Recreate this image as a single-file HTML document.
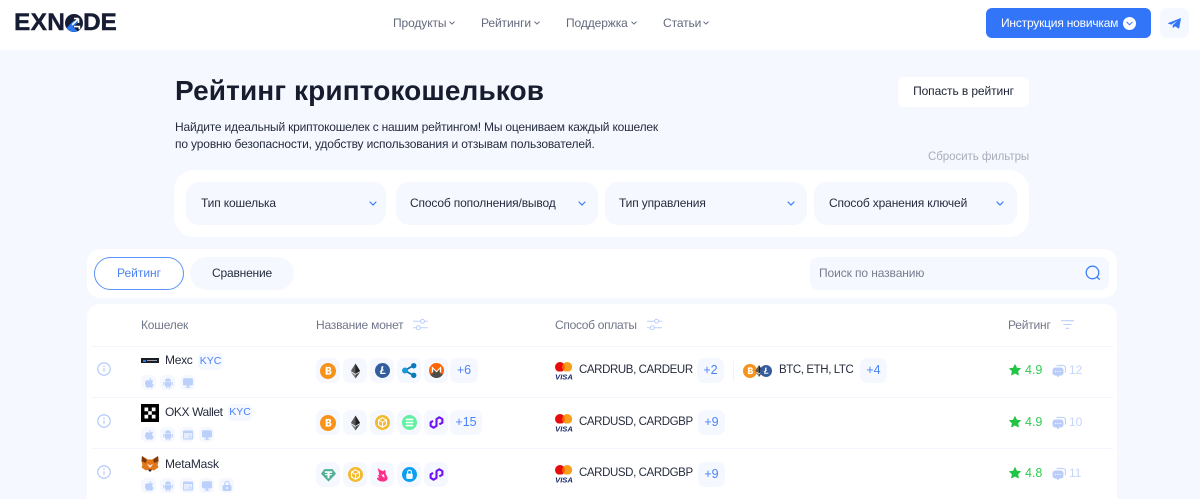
<!DOCTYPE html>
<html lang="ru"><head><meta charset="utf-8"><title>Рейтинг криптокошельков</title>
<style>
*{box-sizing:border-box}
html,body{margin:0;padding:0;overflow:hidden;height:499px}
body{width:1200px;position:relative;background:#f5f8ff;font-family:"Liberation Sans","DejaVu Sans",sans-serif;color:#1b2233}
.a{position:absolute;white-space:nowrap}
.w{background:#fff}
.t{position:absolute;white-space:nowrap;line-height:16px;height:16px}
.nav{font-size:12px;color:#636a7e;top:15px;letter-spacing:-.1px}
.th{font-size:12px;color:#71778a;top:317px;letter-spacing:-.2px}
.flt{position:absolute;top:182px;height:43px;background:#f5f8ff;border-radius:13px;font-size:12px;letter-spacing:-.15px;line-height:43px;padding-left:15px;color:#262c3e}
.ci{position:absolute;background:#f5f8ff;border-radius:7px;width:24px;height:25px;display:flex;align-items:center;justify-content:center}
.pl{position:absolute;background:#f5f8ff;border-radius:7px;height:25px;line-height:25px;text-align:center;font-size:12.5px;color:#4b83f7}
.si{position:absolute;width:15px;height:15px;background:#f5f8ff;border-radius:5px;display:flex;align-items:center;justify-content:center}
.kyc{position:absolute;height:17px;line-height:17px;background:#f5f8ff;border-radius:5px;color:#4b83f7;font-size:10.5px;text-align:center}
.nm{font-size:12px;color:#262c3e}
.pay{font-size:11.5px;letter-spacing:-.4px;color:#262c3e}
.hr{position:absolute;left:91px;width:1022px;height:1px;background:#f3f6fe}
.sc{color:#2fcb52;font-size:12.5px}
.cc{color:#c6d5fc;font-size:12px}
svg{display:block}
</style></head><body>
<svg width="0" height="0" style="position:absolute">
<defs>
<symbol id="btc" viewBox="0 0 16 16"><circle cx="8" cy="8" r="8" fill="#f7931a"/><path d="M5.6 3.9h3.3c1.5 0 2.2.8 2.2 1.9 0 .8-.4 1.4-1.1 1.7.9.2 1.5.9 1.5 1.9 0 1.4-1 2.2-2.5 2.2H5.6V3.9zm2 1.5v1.6h1c.5 0 .8-.3.8-.8s-.3-.8-.8-.8h-1zm0 3v1.7h1.2c.6 0 .9-.3.9-.9s-.3-.8-.9-.8H7.600z" fill="#fff"/></symbol>
<symbol id="eth" viewBox="0 0 16 16"><path d="M8 0 3 8l5 3z" fill="#5a5a5a"/><path d="M8 0l5 8-5 3z" fill="#222"/><path d="M3 9l5 7v-4z" fill="#8a8a8a"/><path d="M13 9l-5 7v-4z" fill="#444"/></symbol>
<symbol id="ltc" viewBox="0 0 16 16"><circle cx="8" cy="8" r="8" fill="#345d9d"/><path d="M7 3.500h2L8.100 7.300l1.500-.5-.3 1.100-1.600.6-.5 1.900h4.200l-.4 1.300H5.300l.8-2.700-1.200.4.3-1 1.200-.5z" fill="#fff"/></symbol>
<symbol id="xrp" viewBox="0 0 16 16"><path d="M3 8l9.500-5.500M3 8l9.500 5.500" stroke="#0a74b0" stroke-width="1.900"/><circle cx="3.200" cy="8" r="3.200" fill="#1a9ad6"/><circle cx="12.500" cy="2.900" r="2.900" fill="#0a7ab8"/><circle cx="12.500" cy="13.100" r="2.900" fill="#0a7ab8"/></symbol>
<symbol id="xmr" viewBox="0 0 16 16"><circle cx="8" cy="8" r="8" fill="#ff6600"/><path d="M1 11.500h3V6l4 4 4-4v5.500h3A8 8 0 0 1 8 16a8 8 0 0 1-7-4.500z" fill="#4c4c4c"/><path d="M3 10V3.500l5 5 5-5V10h-1.500V6.500L8 10 4.500 6.500V10z" fill="#fff"/></symbol>
<symbol id="bnb" viewBox="0 0 16 16"><circle cx="8" cy="8" r="8" fill="#f3ba2f"/><path d="M8 3l4.200 2.400v5.200L8 13l-4.200-2.400V5.400z" fill="none" stroke="#fff" stroke-width="1.200"/><path d="M3.800 5.400L8 7.800l4.200-2.400M8 7.800V13" fill="none" stroke="#fff" stroke-width="1"/></symbol>
<symbol id="sol" viewBox="0 0 16 16"><circle cx="8" cy="8" r="8" fill="#5ff0a0"/><path d="M4 4.700h8M4 8h8M4 11.300h8" stroke="#fff" stroke-width="1.700"/></symbol>
<symbol id="pol" viewBox="1.400 2.800 13.800 12.400"><path d="M5 7.500 2.700 8.800v3.400L5.500 14l2.800-1.800V5.800L11 4l2.900 1.800v3.400L11 10.800" fill="none" stroke="#6f12f5" stroke-width="2" stroke-linejoin="round"/></symbol>
<symbol id="usdt" viewBox="0 0 18 16"><path d="M4 1h10l4 5.500L9 16 0 6.500z" fill="#50af95"/><path d="M4.500 3.500h9v2h-3.300v1.200c1.800.1 3.300.4 3.300.9s-1.500.8-3.300.9V12H7.800V8.500c-1.800-.1-3.300-.4-3.300-.9s1.500-.8 3.300-.9V5.500H4.500z" fill="#fff"/></symbol>
<symbol id="uni" viewBox="0 0 16 18"><path d="M2 1c3 2.500 5 3.500 7 3.800.7-.8 1.500-1.300 2.300-1.300l.9 5.500c1.200 1.700 2 3 2 4.500 0 2.500-2.500 4.200-5.500 4.200-3.500 0-7-1.500-7.500-4 .5-1 1.300-1 2-.5.500-1.500 0-2-1-3.500.8-.3 1.500-.2 2 .2C3.500 7 3 4 2 1z" fill="#ff2d87"/><path d="M6 9c1.500.5 3 .2 4-.8-.2 2-.2 3 1.200 4.500-1.800 0-3.200-.8-3.500-2.200z" fill="#fff"/></symbol>
<symbol id="lock" viewBox="0 0 16 16"><circle cx="8" cy="8" r="8" fill="#0a9ff0"/><rect x="4.600" y="7" width="6.800" height="5.600" rx="1" fill="#fff"/><path d="M5.900 7V5.500a2.100 2.100 0 0 1 4.200 0V7" fill="none" stroke="#fff" stroke-width="1.200"/></symbol>
<symbol id="visa" viewBox="0 0 18 18"><circle cx="5" cy="5" r="5" fill="#e80b0b"/><circle cx="12.200" cy="5" r="5" fill="#f79e1b"/><path d="M8.600 1.600a5 5 0 0 1 0 6.800 5 5 0 0 1 0-6.800z" fill="#ff5f00"/><rect y="9.500" width="18" height="8.500" fill="#fff"/><text x="9" y="17.300" text-anchor="middle" font-family="Liberation Sans" font-size="7.600" font-weight="700" font-style="italic" fill="#1a2a6c">VISA</text></symbol>
<symbol id="apple" viewBox="0 0 12 12"><path d="M8.200 1c.1.900-.8 2-1.900 1.900C6.200 2 7.200 1 8.200 1zM6.300 3.500c.6 0 1.200-.5 2-.5.800 0 1.500.4 1.900 1-1.600.9-1.300 3 .4 3.700-.4 1.200-1.300 3-2.400 3-.7 0-1-.4-1.800-.4s-1.100.4-1.800.4C3.400 10.700 2 8.200 2 6.200c0-2 1.300-3.100 2.600-3.100.7 0 1.200.4 1.700.4z" fill="#bcd0fc"/></symbol>
<symbol id="andr" viewBox="0 0 12 12"><path d="M3 4.200a3 3 0 0 1 6 0z" fill="#bcd0fc"/><rect x="3" y="4.800" width="6" height="4.700" rx=".7" fill="#bcd0fc"/><rect x="1.300" y="4.800" width="1.200" height="3.600" rx=".6" fill="#bcd0fc"/><rect x="9.500" y="4.800" width="1.200" height="3.600" rx=".6" fill="#bcd0fc"/><rect x="4" y="9" width="1.300" height="2.300" rx=".6" fill="#bcd0fc"/><rect x="6.700" y="9" width="1.300" height="2.300" rx=".6" fill="#bcd0fc"/></symbol>
<symbol id="desk" viewBox="0 0 12 12"><rect x="1" y="1.300" width="10" height="7.200" rx="1.500" fill="#bcd0fc"/><rect x="5" y="8.500" width="2" height="1.500" fill="#bcd0fc"/><rect x="3.500" y="9.800" width="5" height="1" rx=".5" fill="#bcd0fc"/></symbol>
<symbol id="web" viewBox="0 0 12 12"><rect x="1" y="1.500" width="10" height="9" rx="1.300" fill="#bcd0fc"/><rect x="2" y="4" width="8" height="5.500" fill="#e4ecff"/><path d="M7 6.500l3 1.500-1.500.5-.5 1.500z" fill="#bcd0fc"/></symbol>
<symbol id="hw" viewBox="0 0 12 12"><rect x="1.500" y="5" width="9" height="6" rx="1.500" fill="#bcd0fc"/><path d="M3.800 5V3.500a2.200 2.200 0 0 1 4.400 0V5" fill="none" stroke="#bcd0fc" stroke-width="1.100"/><circle cx="6" cy="8" r="1" fill="#f5f8ff"/></symbol>
<symbol id="info" viewBox="0 0 14 14"><circle cx="7" cy="7" r="6.200" fill="none" stroke="#a9c4fb" stroke-width="1.100"/><path d="M7 6.300v3.500" stroke="#a9c4fb" stroke-width="1.100"/><circle cx="7" cy="4.300" r=".7" fill="#a9c4fb"/></symbol>
<symbol id="star" viewBox="0 0 14 14"><path d="M7 .8l1.900 4 4.400.5-3.200 3 .9 4.400L7 10.500l-4 2.200.9-4.400-3.200-3 4.400-.5z" fill="#20c545" stroke="#20c545" stroke-linejoin="round"/></symbol>
<symbol id="bub" viewBox="0 0 14 14"><path d="M4.500 1.500h6.500a2.500 2.500 0 0 1 2.500 2.500v4.500" fill="none" stroke="#c3d4fc" stroke-width="1.300"/><rect x="0.500" y="3.500" width="11" height="8" rx="2.800" fill="#b9ccfa"/><path d="M4.500 11.500h3L5.800 13.500z" fill="#b9ccfa"/><circle cx="3.700" cy="7.500" r=".6" fill="#fff"/><circle cx="6" cy="7.500" r=".6" fill="#fff"/><circle cx="8.300" cy="7.500" r=".6" fill="#fff"/></symbol>
<symbol id="sl" viewBox="0 0 16 14"><g fill="none" stroke="#bccffa" stroke-width="1.100"><path d="M0 3.500h8M12.500 3.500H16M0 10.500h3.500M8 10.500h8"/><circle cx="10.200" cy="3.500" r="2.100"/><circle cx="5.700" cy="10.500" r="2.100"/></g></symbol>
<symbol id="chev" viewBox="0 0 8 5"><path d="M1 1l3 3 3-3" fill="none" stroke="currentColor" stroke-width="1.200" stroke-linecap="round"/></symbol>
</defs></svg>

<div class="a w" style="left:0;top:0;width:1200px;height:50px"></div>

<!-- logo -->
<div class="t" style="left:14px;top:12px;height:22px;line-height:22px;font-size:24.500px;font-weight:700;color:#151c33;letter-spacing:.3px;-webkit-text-stroke:.4px #151c33">EXN</div>
<svg class="a" style="left:65px;top:14px" width="18" height="18" viewBox="0 0 20 20"><circle cx="10" cy="10" r="10" fill="#151c33"/><path d="M2 15.500A10 10 0 0 0 14 19.200L9 14l5-4 0-4-5 2-3 3z" fill="#2a78f5"/><path d="M8 12l7-7M15 5v5M15 5h-5" stroke="#fff" stroke-width="1.800" fill="none"/><path d="M10 14h6v3" stroke="#fff" stroke-width="1.800" fill="none"/></svg>
<div class="t" style="left:83px;top:12px;height:22px;line-height:22px;font-size:24.500px;font-weight:700;color:#151c33;letter-spacing:-.2px;-webkit-text-stroke:.4px #151c33">DE</div>

<!-- nav -->
<div class="t nav" style="left:393px">Продукты</div><svg class="a" style="left:449px;top:21px;color:#636a7e" width="6" height="4"><use href="#chev"/></svg>
<div class="t nav" style="left:481px">Рейтинги</div><svg class="a" style="left:534px;top:21px;color:#636a7e" width="6" height="4"><use href="#chev"/></svg>
<div class="t nav" style="left:566px">Поддержка</div><svg class="a" style="left:631px;top:21px;color:#636a7e" width="6" height="4"><use href="#chev"/></svg>
<div class="t nav" style="left:663px">Статьи</div><svg class="a" style="left:703px;top:21px;color:#636a7e" width="6" height="4"><use href="#chev"/></svg>

<!-- header buttons -->
<div class="a" style="left:986px;top:8px;width:165px;height:30px;background:#3275f8;border-radius:6px"></div>
<div class="t" style="left:1001px;top:15px;font-size:12px;letter-spacing:-.2px;color:#fff">Инструкция новичкам</div>
<div class="a" style="left:1123px;top:17px;width:13px;height:13px;border-radius:50%;background:#fff"></div>
<svg class="a" style="left:1126px;top:21px;color:#3275f8" width="7" height="5"><use href="#chev"/></svg>
<div class="a" style="left:1160px;top:8px;width:29px;height:30px;background:#f5f8ff;border-radius:7px"></div>
<svg class="a" style="left:1168px;top:18px" width="13" height="11" viewBox="0 0 13 11"><path d="M.3 5L12.300.2c.4-.1.700.2.600.6l-1.700 9.200c-.1.500-.6.600-1 .3L7 8.200 5.300 9.800c-.2.200-.5.100-.5-.2L4.600 7.200 9.500 2.800 3.200 6.600.4 5.700C0 5.600 0 5.200.3 5z" fill="#3275f8"/></svg>

<!-- title -->
<div class="a" style="left:175px;top:73px;font-size:28px;line-height:36px;font-weight:700;color:#171d2e;letter-spacing:.12px">Рейтинг криптокошельков</div>
<div class="a w" style="left:898px;top:77px;width:131px;height:30px;border-radius:6px;text-align:center;line-height:29px;font-size:12px;letter-spacing:-.1px;color:#1b2233">Попасть в рейтинг</div>
<div class="t" style="left:175px;top:119px;font-size:12px;letter-spacing:-.2px;color:#262c3e">Найдите идеальный криптокошелек с нашим рейтингом! Мы оцениваем каждый кошелек</div>
<div class="t" style="left:175px;top:136px;font-size:12px;letter-spacing:-.15px;color:#262c3e">по уровню безопасности, удобству использования и отзывам пользователей.</div>
<div class="t" style="left:928px;top:149px;font-size:11.500px;letter-spacing:-.05px;color:#a8adba">Сбросить фильтры</div>

<!-- filters -->
<div class="a w" style="left:174px;top:170px;width:855px;height:67px;border-radius:20px"></div>
<div class="flt" style="left:186px;width:200px">Тип кошелька</div>
<div class="flt" style="left:396px;width:202px;padding-left:14px">Способ пополнения/вывод</div>
<div class="flt" style="left:605px;width:202px;padding-left:14px">Тип управления</div>
<div class="flt" style="left:814px;width:203px">Способ хранения ключей</div>
<svg class="a" style="left:369px;top:201px;color:#3a7cf6" width="8" height="5"><use href="#chev"/></svg>
<svg class="a" style="left:578px;top:201px;color:#3a7cf6" width="8" height="5"><use href="#chev"/></svg>
<svg class="a" style="left:787px;top:201px;color:#3a7cf6" width="8" height="5"><use href="#chev"/></svg>
<svg class="a" style="left:996px;top:201px;color:#3a7cf6" width="8" height="5"><use href="#chev"/></svg>

<!-- tabs panel -->
<div class="a w" style="left:87px;top:249px;width:1030px;height:49px;border-radius:13px"></div>
<div class="a" style="left:94px;top:257px;width:90px;height:33px;border:1px solid #5b93f8;border-radius:17px;text-align:center;line-height:31px;font-size:12px;color:#4b83f7;background:#fff">Рейтинг</div>
<div class="a" style="left:190px;top:257px;width:104px;height:33px;background:#f5f8ff;border-radius:17px;text-align:center;line-height:33px;font-size:12px;color:#262c3e;letter-spacing:-.2px">Сравнение</div>
<div class="a" style="left:810px;top:257px;width:299px;height:33px;background:#f5f8ff;border-radius:8px"></div>
<div class="t" style="left:819px;top:265px;font-size:12px;color:#777d8e;letter-spacing:-.1px">Поиск по названию</div>
<svg class="a" style="left:1085px;top:265px" width="16" height="17" viewBox="0 0 16 17"><circle cx="7.500" cy="7.500" r="6.300" fill="none" stroke="#3f80f6" stroke-width="1.300"/><path d="M12.500 12.500l1.800 1.800" stroke="#3f80f6" stroke-width="1.300" stroke-linecap="round"/></svg>

<!-- table -->
<div class="a w" style="left:87px;top:304px;width:1030px;height:195px;border-radius:13px 13px 0 0"></div>
<div class="t th" style="left:141px">Кошелек</div>
<div class="t th" style="left:316px">Название монет</div>
<svg class="a" style="left:413px;top:318px" width="15" height="13"><use href="#sl"/></svg>
<div class="t th" style="left:555px;letter-spacing:-.3px">Способ оплаты</div>
<svg class="a" style="left:647px;top:318px" width="15" height="13"><use href="#sl"/></svg>
<div class="t th" style="left:1008px">Рейтинг</div>
<svg class="a" style="left:1061px;top:320px" width="13" height="9" viewBox="0 0 13 9"><path d="M0 .7h13M2.500 4.500h8M4.700 8.300h3.600" stroke="#bccffa" stroke-width="1.100"/></svg>
<div class="hr" style="top:346px"></div><div class="hr" style="top:397px"></div><div class="hr" style="top:448px"></div>

<!-- row 1 -->
<svg class="a" style="left:97px;top:362px" width="14" height="14"><use href="#info"/></svg>
<div class="a" style="left:141px;top:358px;width:18px;height:5px;background:#1a1d24"></div><div class="a" style="left:143px;top:360px;width:3px;height:2px;background:#2a78f5"></div><div class="a" style="left:147px;top:360px;width:10px;height:1px;background:#9aa0ad"></div>
<div class="t nm" style="left:165px;top:352px;letter-spacing:-.3px">Mexc</div>
<div class="kyc" style="left:198px;top:353px;width:25px">KYC</div>
<div class="si" style="left:141px;top:375px"><svg width="12" height="12"><use href="#apple"/></svg></div>
<div class="si" style="left:160px;top:375px"><svg width="12" height="12"><use href="#andr"/></svg></div>
<div class="si" style="left:180px;top:375px"><svg width="12" height="12"><use href="#desk"/></svg></div>
<div class="ci" style="left:316px;top:358px"><svg width="16" height="16"><use href="#btc"/></svg></div>
<div class="ci" style="left:343px;top:358px"><svg width="15" height="16"><use href="#eth"/></svg></div>
<div class="ci" style="left:370px;top:358px"><svg width="15" height="15"><use href="#ltc"/></svg></div>
<div class="ci" style="left:397px;top:358px"><svg width="15" height="15"><use href="#xrp"/></svg></div>
<div class="ci" style="left:424px;top:358px"><svg width="15" height="15"><use href="#xmr"/></svg></div>
<div class="pl" style="left:450px;top:358px;width:28px">+6</div>
<svg class="a" style="left:555px;top:362px" width="18" height="18"><use href="#visa"/></svg>
<div class="t pay" style="left:579px;top:362px">CARDRUB, CARDEUR</div>
<div class="pl" style="left:697px;top:358px;width:27px">+2</div>
<div class="a" style="left:733px;top:361px;width:1px;height:20px;background:#f0f3fb"></div>
<svg class="a" style="left:743px;top:364px" width="14" height="14"><use href="#btc"/></svg>
<svg class="a" style="left:753px;top:364px" width="12" height="14"><use href="#eth"/></svg>
<svg class="a" style="left:760px;top:365px" width="12" height="12"><use href="#ltc"/></svg>
<div class="t pay" style="left:779px;top:362px">BTC, ETH, LTC</div>
<div class="pl" style="left:860px;top:358px;width:27px">+4</div>
<svg class="a" style="left:1009px;top:364px" width="12" height="12"><use href="#star"/></svg>
<div class="t sc" style="left:1025px;top:362px">4.9</div>
<svg class="a" style="left:1052px;top:364px" width="14" height="14"><use href="#bub"/></svg>
<div class="t cc" style="left:1069px;top:362px">12</div>

<!-- row 2 -->
<svg class="a" style="left:97px;top:414px" width="14" height="14"><use href="#info"/></svg>
<svg class="a" style="left:141px;top:404px" width="18" height="18" viewBox="0 0 18 18"><rect width="18" height="18" fill="#000"/><path d="M3.500 3.500h3.700v3.700H3.500zM10.800 3.500h3.700v3.700h-3.700zM7.200 7.200h3.600v3.600H7.200zM3.500 10.800h3.700v3.700H3.500zM10.800 10.800h3.700v3.700h-3.700z" fill="#fff"/></svg>
<div class="t nm" style="left:165px;top:404px;letter-spacing:-.4px">OKX Wallet</div>
<div class="kyc" style="left:228px;top:404px;width:24px">KYC</div>
<div class="si" style="left:141px;top:427px"><svg width="12" height="12"><use href="#apple"/></svg></div>
<div class="si" style="left:160px;top:427px"><svg width="12" height="12"><use href="#andr"/></svg></div>
<div class="si" style="left:180px;top:427px"><svg width="12" height="12"><use href="#web"/></svg></div>
<div class="si" style="left:199px;top:427px"><svg width="12" height="12"><use href="#desk"/></svg></div>
<div class="ci" style="left:316px;top:410px"><svg width="16" height="16"><use href="#btc"/></svg></div>
<div class="ci" style="left:343px;top:410px"><svg width="15" height="16"><use href="#eth"/></svg></div>
<div class="ci" style="left:370px;top:410px"><svg width="15" height="15"><use href="#bnb"/></svg></div>
<div class="ci" style="left:397px;top:410px"><svg width="15" height="15"><use href="#sol"/></svg></div>
<div class="ci" style="left:424px;top:410px"><svg width="15" height="13"><use href="#pol"/></svg></div>
<div class="pl" style="left:450px;top:410px;width:32px">+15</div>
<svg class="a" style="left:555px;top:414px" width="18" height="18"><use href="#visa"/></svg>
<div class="t pay" style="left:579px;top:414px">CARDUSD, CARDGBP</div>
<div class="pl" style="left:698px;top:410px;width:27px">+9</div>
<svg class="a" style="left:1009px;top:416px" width="12" height="12"><use href="#star"/></svg>
<div class="t sc" style="left:1025px;top:414px">4.9</div>
<svg class="a" style="left:1052px;top:416px" width="14" height="14"><use href="#bub"/></svg>
<div class="t cc" style="left:1069px;top:414px">10</div>

<!-- row 3 -->
<svg class="a" style="left:97px;top:465px" width="14" height="14"><use href="#info"/></svg>
<svg class="a" style="left:141px;top:456px" width="18" height="16" viewBox="0 0 18 16"><path d="M1 0l6 3.500h4L17 0l.6 5-1 4 .8 2.500L13 14.500l-2-.8H7l-2 .8-4.400-3L1.400 9 .4 5z" fill="#e2761b"/><path d="M6 8l1.500 2.500L9 12l1.500-1.500L12 8l-3 1z" fill="#f6d8bd"/><path d="M7 13.500h4L9.800 15.500H8.200z" fill="#2c2c2c"/><path d="M1 0l5 4-1.500 3L.6 5zM17 0l-5 4 1.500 3 4-2z" fill="#7a3a10"/></svg>
<div class="t nm" style="left:165px;top:456px;letter-spacing:-.2px">MetaMask</div>
<div class="si" style="left:141px;top:478px"><svg width="12" height="12"><use href="#apple"/></svg></div>
<div class="si" style="left:160px;top:478px"><svg width="12" height="12"><use href="#andr"/></svg></div>
<div class="si" style="left:180px;top:478px"><svg width="12" height="12"><use href="#web"/></svg></div>
<div class="si" style="left:199px;top:478px"><svg width="12" height="12"><use href="#desk"/></svg></div>
<div class="si" style="left:219px;top:478px"><svg width="12" height="12"><use href="#hw"/></svg></div>
<div class="ci" style="left:316px;top:462px"><svg width="15" height="14"><use href="#usdt"/></svg></div>
<div class="ci" style="left:343px;top:462px"><svg width="15" height="15"><use href="#bnb"/></svg></div>
<div class="ci" style="left:370px;top:462px"><svg width="13" height="15"><use href="#uni"/></svg></div>
<div class="ci" style="left:397px;top:462px"><svg width="15" height="15"><use href="#lock"/></svg></div>
<div class="ci" style="left:424px;top:462px"><svg width="15" height="13"><use href="#pol"/></svg></div>
<svg class="a" style="left:555px;top:465px" width="18" height="18"><use href="#visa"/></svg>
<div class="t pay" style="left:579px;top:465px">CARDUSD, CARDGBP</div>
<div class="pl" style="left:698px;top:462px;width:27px">+9</div>
<svg class="a" style="left:1009px;top:467px" width="12" height="12"><use href="#star"/></svg>
<div class="t sc" style="left:1025px;top:465px">4.8</div>
<svg class="a" style="left:1052px;top:467px" width="14" height="14"><use href="#bub"/></svg>
<div class="t cc" style="left:1069px;top:465px">11</div>
</body></html>
